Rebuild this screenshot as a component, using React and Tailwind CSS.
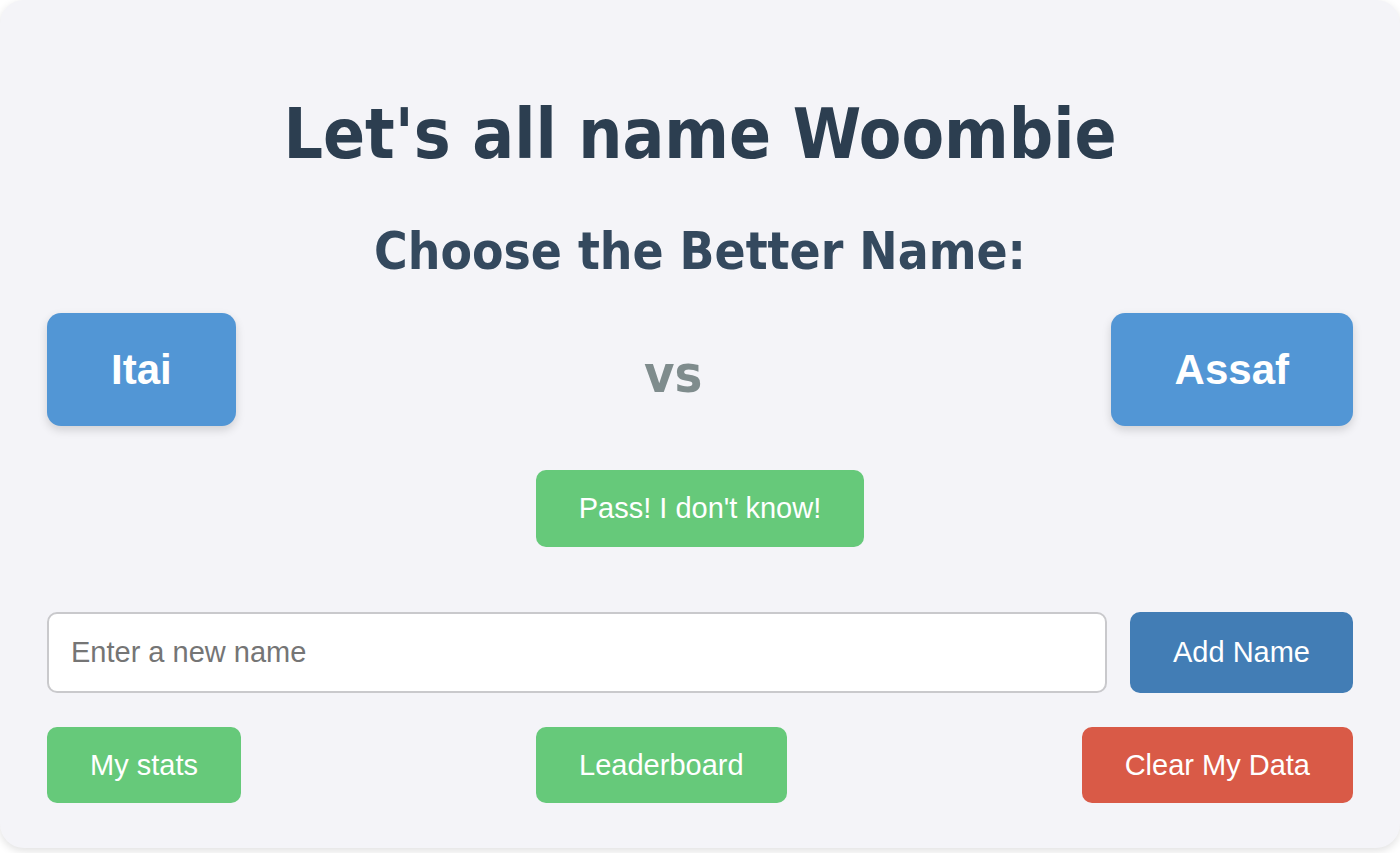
export default function App() {
  const heading = { fontFamily: '"DejaVu Sans Condensed", "DejaVu Sans", Verdana, sans-serif' };
  const sans = { fontFamily: '"Liberation Sans", Arial, Helvetica, sans-serif' };

  return (
    <div className="w-[1400px] h-[853px] bg-white overflow-hidden">
      <div className="h-[848px] w-[1400px] rounded-3xl bg-[#f4f4f8] shadow-[0_3px_8px_rgba(0,0,0,0.12)] px-[47px] pt-[100px] flex flex-col">
        <h1
          className="text-center font-bold text-[69px] leading-none text-[#2c3e50]"
          style={heading}
        >
          Let's all name Woombie
        </h1>
        <h2
          className="mt-[57px] text-center font-bold text-[51px] leading-none text-[#34495e]"
          style={heading}
        >
          Choose the Better Name:
        </h2>

        <div className="mt-[36px] flex items-center justify-between" style={sans}>
          <button className="h-[113px] px-[64px] rounded-[14px] bg-[#5296d5] text-white font-bold text-[42px] leading-none shadow-[0_4px_10px_rgba(0,0,0,0.15)]">
            Itai
          </button>
          <span className="font-bold text-[52px] leading-none text-[#7f8c8d] mt-[8px]" style={heading}>
            vs
          </span>
          <button className="h-[113px] px-[64px] rounded-[14px] bg-[#5296d5] text-white font-bold text-[42px] leading-none shadow-[0_4px_10px_rgba(0,0,0,0.15)]">
            Assaf
          </button>
        </div>

        <div className="mt-[44px] flex justify-center" style={sans}>
          <button className="h-[77px] px-[43px] rounded-[10px] bg-[#66c97a] text-white text-[29px] leading-none">
            Pass! I don't know!
          </button>
        </div>

        <div className="mt-[65px] flex gap-[23px]" style={sans}>
          <input
            type="text"
            placeholder="Enter a new name"
            className="flex-1 h-[81px] rounded-[10px] border-2 border-[#c9c9cc] bg-white px-[22px] text-[29px] text-[#333] placeholder:text-[#757575] outline-none"
          />
          <button className="h-[81px] px-[43px] rounded-[10px] bg-[#427db5] text-white text-[29px] leading-none">
            Add Name
          </button>
        </div>

        <div className="mt-[34px] flex justify-between" style={sans}>
          <button className="h-[76px] px-[43px] rounded-[10px] bg-[#66c97a] text-white text-[29px] leading-none">
            My stats
          </button>
          <button className="h-[76px] px-[43px] rounded-[10px] bg-[#66c97a] text-white text-[29px] leading-none">
            Leaderboard
          </button>
          <button className="h-[76px] px-[43px] rounded-[10px] bg-[#d95a47] text-white text-[29px] leading-none">
            Clear My Data
          </button>
        </div>
      </div>
    </div>
  );
}
